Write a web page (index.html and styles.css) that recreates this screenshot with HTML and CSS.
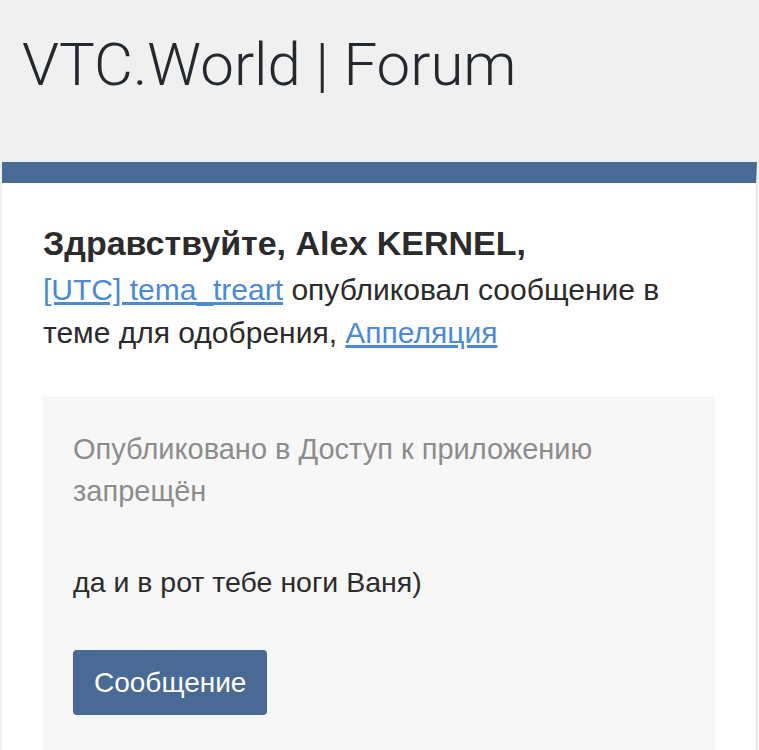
FILE: index.html
```html
<!DOCTYPE html>
<html lang="ru">
  <head>
    <meta charset="UTF-8" />
    <meta name="viewport" content="width=device-width, initial-scale=1.0" />
    <title>VTC.World | Forum</title>
    <link rel="stylesheet" href="styles.css">
  </head>
  <body>
    <div class="header">
      <h1 class="title">VTC.World | Forum</h1>
    </div>
    <div class="card">
      <div class="content">
        <p class="hello">Здравствуйте, Alex KERNEL,</p>
        <p class="intro">
          <a href="#">[UTC] tema_treart</a> опубликовал сообщение в теме для одобрения, <a href="#">Аппеляция</a>
        </p>
        <div class="message">
          <p class="meta">Опубликовано в Доступ к приложению запрещён</p>
          <p class="text">да и в рот тебе ноги Ваня)</p>
          <a class="button" href="#">Сообщение</a>
        </div>
      </div>
    </div>
  </body>
</html>
```

FILE: styles.css
```css
body {
  margin: 0;
  padding: 0;
  background: #f0f0f0;
  font-family: "Liberation Sans", Arial, sans-serif;
  color: #2b2b2b;
}
.header {
  height: 162px;
  padding: 0 22px;
  box-sizing: border-box;
}
.title {
  margin: 0;
  padding-top: 25px;
  font-family: Roboto, "Liberation Sans", sans-serif;
  font-weight: 300;
  font-size: 60px;
  line-height: 80px;
  color: #23292e;
}
.card {
  margin: 0 2px;
  background: #fff;
  border-top: 21px solid #496a94;
  border-right: 1px solid #e4e4e4;
  height: 567px;
  overflow: hidden;
}
.content {
  padding: 37px 41px 0 41px;
}
.hello {
  margin: 0 0 2px 0;
  font-size: 34px;
  font-weight: bold;
  line-height: 46px;
}
.intro {
  margin: 0;
  font-size: 30px;
  line-height: 43px;
}
.intro a {
  color: #4a8ad6;
}
.message {
  margin-top: 42px;
  background: #f7f7f7;
  padding: 32px 30px 40px 30px;
}
.meta {
  margin: 0;
  font-size: 29px;
  line-height: 42px;
  color: #8c8c8c;
}
.text {
  margin: 49px 0 0 0;
  font-size: 28.5px;
  line-height: 42px;
}
.button {
  display: inline-block;
  margin-top: 47px;
  padding: 0 21px;
  height: 65px;
  line-height: 65px;
  background: #496a94;
  color: #fff;
  font-size: 28px;
  text-decoration: none;
  border-radius: 4px;
}
```
